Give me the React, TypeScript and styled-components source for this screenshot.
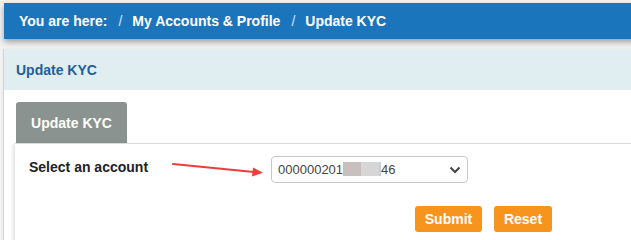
import * as React from 'react'
import styled, { createGlobalStyle } from 'styled-components'

const GlobalStyle = createGlobalStyle`
  html, body {
    margin: 0;
    padding: 0;
    background: #f2f2f2;
    font-family: "Liberation Sans", Arial, sans-serif;
    overflow: hidden;
  }
`

const Page = styled.div`
  padding: 3px 0 0 4px;
  width: 660px;
`

const Breadcrumb = styled.div`
  height: 36px;
  display: flex;
  align-items: center;
  padding-left: 15px;
  background: #1b75bc;
  color: #fff;
  font-size: 14px;
  font-weight: bold;
  box-shadow: 0 3px 6px rgba(0, 0, 0, 0.35);
`

const Sep = styled.span`
  color: #d5e4f2;
  font-weight: normal;
  margin: 0 10px 0 11px;
`

const Panel = styled.div`
  margin-top: 10px;
  background: #fff;
  box-shadow: -1px 0 1px rgba(0, 0, 0, 0.12);
  height: 200px;
`

const PanelHeader = styled.div`
  height: 41px;
  display: flex;
  align-items: center;
  padding-left: 12px;
  background: #e0eef2;
  color: #1f5f99;
  font-size: 14px;
  font-weight: bold;
`

const PanelBody = styled.div`
  padding: 12px 0 0 11px;
`

const Tab = styled.div`
  width: 111px;
  height: 41px;
  margin-left: 1px;
  display: flex;
  align-items: center;
  justify-content: center;
  background: #8a9390;
  color: #fff;
  font-size: 14px;
  font-weight: bold;
  border-radius: 3px 3px 0 0;
`

const TabContent = styled.div`
  position: relative;
  border-top: 1px solid #dcdcdc;
  box-shadow: -2px 1px 3px rgba(0, 0, 0, 0.12);
  padding: 12px 0 20px 14px;
`

const FieldRow = styled.div`
  position: relative;
  display: grid;
  grid-template-columns: 242px 197px;
  align-items: start;
`

const Label = styled.div`
  color: #222;
  font-size: 14px;
  font-weight: bold;
  padding-top: 3px;
`

const SelectBox = styled.div`
  height: 25px;
  display: flex;
  align-items: center;
  justify-content: space-between;
  padding: 0 6px;
  border: 1px solid #c8c8c8;
  border-radius: 4px;
  background: #fff;
  color: #444;
  font-size: 13px;
`

const Blur = styled.span<{ $tone: string; $w: number }>`
  display: inline-block;
  width: ${p => p.$w}px;
  height: 14px;
  vertical-align: -2px;
  background: ${p => p.$tone};
`

const Arrow = styled.svg`
  position: absolute;
  left: 143px;
  top: 6px;
`

const Actions = styled.div`
  display: flex;
  gap: 12px;
  margin: 23px 0 0 386px;
`

const OrangeButton = styled.button<{ $w: number }>`
  width: ${p => p.$w}px;
  height: 26px;
  border: none;
  border-radius: 3px;
  background: #f7941d;
  color: #fff;
  font-family: "Liberation Sans", Arial, sans-serif;
  font-size: 14px;
  font-weight: bold;
  padding: 0;
`

const App = () => {
  return (
    <>
      <GlobalStyle />
      <Page>
        <Breadcrumb>
          You are here:<Sep>/</Sep>My Accounts &amp; Profile<Sep>/</Sep>Update KYC
        </Breadcrumb>
        <Panel>
          <PanelHeader>Update KYC</PanelHeader>
          <PanelBody>
            <Tab>Update KYC</Tab>
            <TabContent>
              <FieldRow>
                <Label>Select an account</Label>
                <SelectBox>
                  <span>
                    000000201
                    <Blur $tone="#c9bfbf" $w={18} />
                    <Blur $tone="#d6d6d6" $w={18} />
                    <Blur $tone="#c6cfe0" $w={2} />
                    46
                  </span>
                  <svg width="12" height="8" viewBox="0 0 12 8">
                    <polyline points="1.5,1.5 6,6 10.5,1.5" fill="none" stroke="#444" strokeWidth="2" />
                  </svg>
                </SelectBox>
                <Arrow width="96" height="16" viewBox="0 0 96 16">
                  <line x1="1" y1="2" x2="82" y2="10" stroke="#ee3b3b" strokeWidth="2.2" strokeLinecap="round" />
                  <polygon points="91,10.8 81,5.5 80,14.5" fill="#ee3b3b" />
                </Arrow>
              </FieldRow>
              <Actions>
                <OrangeButton $w={67}>Submit</OrangeButton>
                <OrangeButton $w={58}>Reset</OrangeButton>
              </Actions>
            </TabContent>
          </PanelBody>
        </Panel>
      </Page>
    </>
  )
}

export default App
